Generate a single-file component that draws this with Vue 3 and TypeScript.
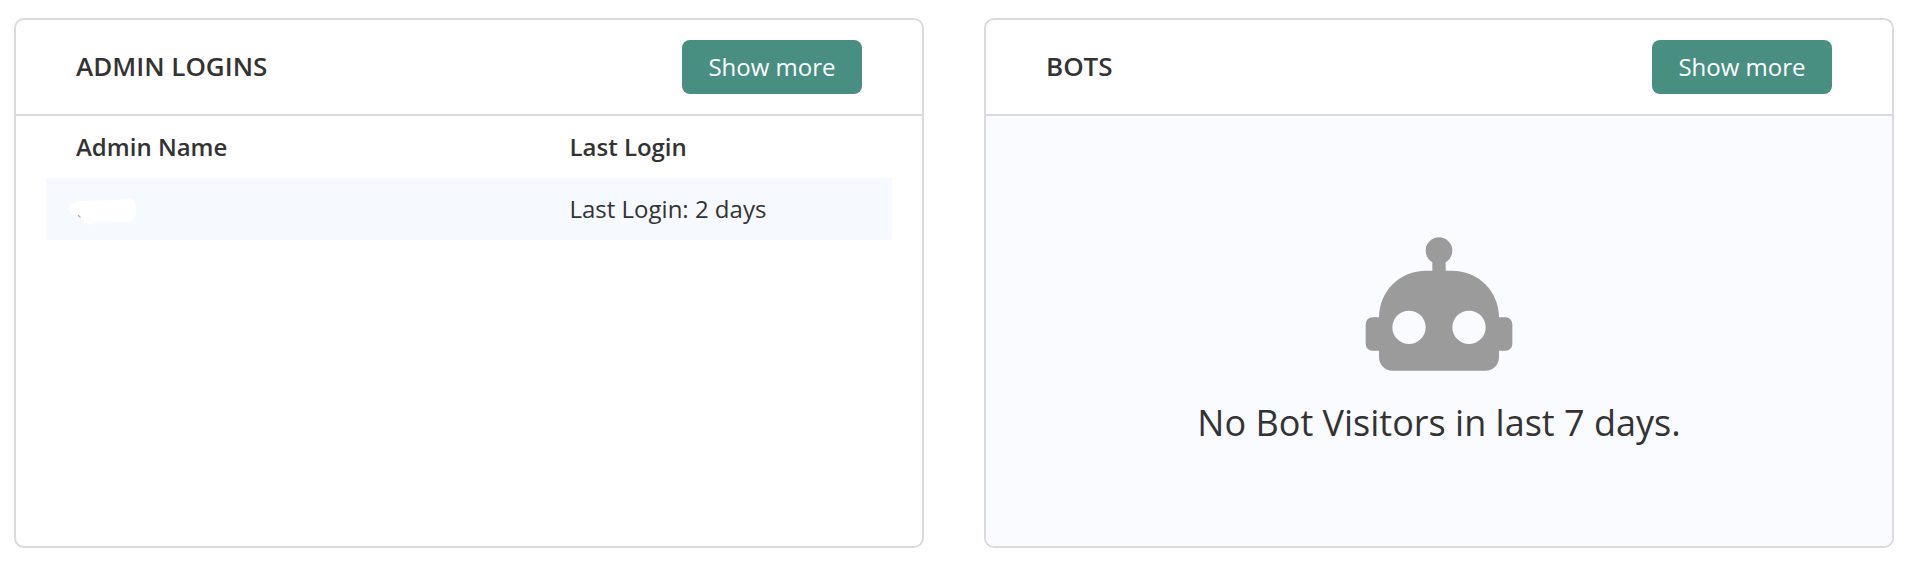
<script setup lang="ts">
interface LoginRow {
  name: string
  lastLogin: string
}

const columns: string[] = ['Admin Name', 'Last Login']
const logins: LoginRow[] = [{ name: '', lastLogin: 'Last Login: 2 days' }]
</script>

<template>
  <main class="dashboard">
    <section class="card">
      <header class="card-header">
        <h2 class="title">ADMIN LOGINS</h2>
        <button class="more" type="button">Show more</button>
      </header>
      <div class="table">
        <div class="row head">
          <span v-for="column in columns" :key="column">{{ column }}</span>
        </div>
        <div v-for="login in logins" :key="login.lastLogin" class="row entry">
          <span class="name">
            <template v-if="login.name">{{ login.name }}</template>
            <svg v-else class="mask" width="70" height="28" viewBox="0 0 70 28">
              <path
                d="M.3 10C1 6 7 3.5 15 3L50 2C57 .8 64 .5 66 3C68 7 69 11 68 14C67 21 63 23.5 57 24L29 23C26 27.5 18 28 14 23L11 19C5 18 0 14 .3 10Z"
                fill="#fff"
              />
              <path d="M10 17.3l2.5 2.2" stroke="#aaa" stroke-width="1.2" />
            </svg>
          </span>
          <span>{{ login.lastLogin }}</span>
        </div>
      </div>
    </section>

    <section class="card">
      <header class="card-header">
        <h2 class="title">BOTS</h2>
        <button class="more" type="button">Show more</button>
      </header>
      <div class="empty">
        <svg class="robot" width="160" height="160" viewBox="0 0 24 24">
          <path
            d="M12 2A2 2 0 0 1 14 4C14 4.74 13.6 5.39 13 5.73V7H14A7 7 0 0 1 21 14H22A1 1 0 0 1 23 15V18A1 1 0 0 1 22 19H21V20A2 2 0 0 1 19 22H5A2 2 0 0 1 3 20V19H2A1 1 0 0 1 1 18V15A1 1 0 0 1 2 14H3A7 7 0 0 1 10 7H11V5.73C10.4 5.39 10 4.74 10 4A2 2 0 0 1 12 2M7.5 13A2.5 2.5 0 0 0 5 15.5A2.5 2.5 0 0 0 7.5 18A2.5 2.5 0 0 0 10 15.5A2.5 2.5 0 0 0 7.5 13M16.5 13A2.5 2.5 0 0 0 14 15.5A2.5 2.5 0 0 0 16.5 18A2.5 2.5 0 0 0 19 15.5A2.5 2.5 0 0 0 16.5 13Z"
            fill="#9b9b9b"
          />
        </svg>
        <p class="message">No Bot Visitors in last 7 days.</p>
      </div>
    </section>
  </main>
</template>

<style>
body {
  background: #fff;
}
</style>

<style scoped>
.dashboard {
  box-sizing: border-box;
  height: 570px;
  padding: 18px 22px 22px 14px;
  display: grid;
  grid-template-columns: 910px 910px;
  gap: 60px;
  overflow: hidden;
  color: #333;
  font-family: "Open Sans", sans-serif;
  font-size: 24px;
}
.card {
  box-sizing: border-box;
  height: 530px;
  display: flex;
  flex-direction: column;
  border: 2px solid #dbdbdb;
  border-radius: 10px;
  overflow: hidden;
}
.card-header {
  box-sizing: border-box;
  height: 96px;
  flex: none;
  padding: 0 60px;
  display: flex;
  align-items: center;
  justify-content: space-between;
  border-bottom: 2px solid #dbdbdb;
}
.title {
  margin: 0;
  padding-bottom: 2px;
  font-size: 26px;
  line-height: 36px;
  font-weight: 600;
}
.more {
  box-sizing: border-box;
  width: 180px;
  height: 54px;
  padding: 0 0 2px;
  border: 0;
  border-radius: 8px;
  background: #488f82;
  color: #fff;
  font: inherit;
}
.table {
  padding: 0 30px;
}
.row {
  box-sizing: border-box;
  height: 62px;
  padding: 0 0 2px 30px;
  display: grid;
  grid-template-columns: 493.5px 1fr;
  align-items: center;
}
.head {
  font-weight: 600;
}
.entry {
  background: #f6f9fe;
}
.name {
  display: flex;
}
.mask {
  margin: 8px 0 0 -8px;
  fill: none;
}
.empty {
  flex: 1;
  display: flex;
  flex-direction: column;
  align-items: center;
  padding-top: 107.5px;
  background: #fafbff;
}
.robot {
  display: block;
  flex: none;
}
.message {
  margin: 14px 0 0;
  font-size: 36px;
  line-height: 50px;
}
</style>
